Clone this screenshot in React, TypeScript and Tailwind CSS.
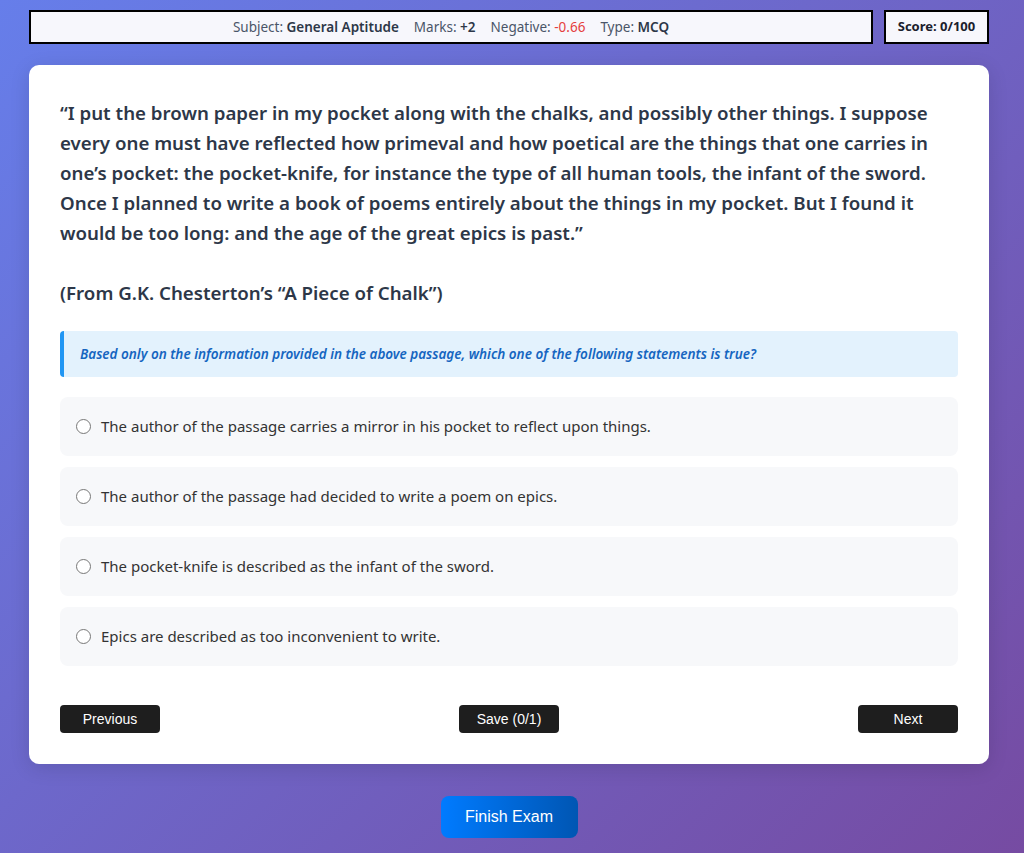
import { useState } from 'react';

const options = [
  'The author of the passage carries a mirror in his pocket to reflect upon things.',
  'The author of the passage had decided to write a poem on epics.',
  'The pocket-knife is described as the infant of the sword.',
  'Epics are described as too inconvenient to write.',
];

export default function App() {
  const [selected, setSelected] = useState<number | null>(null);

  return (
    <div
      className="min-h-[853px] w-full bg-[linear-gradient(135deg,#667eea_0%,#764ba2_100%)] pt-[10px] pl-[29px] pb-[15px]"
      style={{ fontFamily: '"Noto Sans", "Open Sans", sans-serif' }}
    >
      <div className="w-[960px]">
        {/* Top info bar */}
        <div className="flex gap-[11px] h-[34px]">
          <div className="flex-1 border-2 border-black bg-[#f7f7fc] flex items-center justify-center gap-[15px] text-[13.5px] text-[#4a5568]">
            <span>
              Subject: <span className="font-semibold text-[#2d3748]">General Aptitude</span>
            </span>
            <span>
              Marks: <span className="font-semibold text-[#2d3748]">+2</span>
            </span>
            <span>
              Negative: <span className="text-[#e53e3e]">-0.66</span>
            </span>
            <span>
              Type: <span className="font-semibold text-[#2d3748]">MCQ</span>
            </span>
          </div>
          <div className="w-[105px] border-2 border-black bg-[#f7f7fc] flex items-center justify-center text-[13px] font-bold text-[#1a202c]">
            Score: 0/100
          </div>
        </div>

        {/* Question card */}
        <div className="mt-[21px] bg-white rounded-[10px] shadow-[0_4px_20px_rgba(0,0,0,0.12)] px-[31px] pt-[33px] pb-[31px]">
          <p className="text-[18.7px] leading-[30px] font-semibold text-[#2d3748]">
            “I put the brown paper in my pocket along with the chalks, and possibly other things. I suppose
            every one must have reflected how primeval and how poetical are the things that one carries in
            one’s pocket: the pocket-knife, for instance the type of all human tools, the infant of the sword.
            Once I planned to write a book of poems entirely about the things in my pocket. But I found it
            would be too long: and the age of the great epics is past.”
          </p>
          <p className="mt-[30px] text-[18.7px] leading-[30px] font-semibold text-[#2d3748]">
            (From G.K. Chesterton’s “A Piece of Chalk”)
          </p>

          <div className="mt-[23px] h-[46px] flex items-center bg-[#e3f2fd] border-l-4 border-[#2196f3] rounded-[4px] pl-[16px] text-[13.5px] italic font-semibold text-[#1565c0]">
            Based only on the information provided in the above passage, which one of the following statements is true?
          </div>

          <div className="mt-[20px] flex flex-col gap-[11px]">
            {options.map((opt, i) => (
              <label
                key={i}
                className="h-[59px] flex items-center gap-[10px] pl-[16px] bg-[#f7f8fa] rounded-[8px] cursor-pointer text-[15px] text-[#333333]"
              >
                <input
                  type="radio"
                  name="answer"
                  checked={selected === i}
                  onChange={() => setSelected(i)}
                  className="w-[15px] h-[15px] m-0 accent-[#2196f3]"
                />
                {opt}
              </label>
            ))}
          </div>

          <div
            className="mt-[39px] flex justify-between"
            style={{ fontFamily: '"Liberation Sans", Arial, sans-serif' }}
          >
            <button className="w-[100px] h-[28px] bg-[#1e1e1e] text-white text-[14px] rounded-[4px]">Previous</button>
            <button className="w-[100px] h-[28px] bg-[#1e1e1e] text-white text-[14px] rounded-[4px]">Save (0/1)</button>
            <button className="w-[100px] h-[28px] bg-[#1e1e1e] text-white text-[14px] rounded-[4px]">Next</button>
          </div>
        </div>

        <div className="mt-[32px] flex justify-center">
          <button
            className="w-[137px] h-[42px] rounded-[8px] bg-[linear-gradient(90deg,#007bff,#0056b3)] text-white text-[16px]"
            style={{ fontFamily: '"Liberation Sans", Arial, sans-serif' }}
          >
            Finish Exam
          </button>
        </div>
      </div>
    </div>
  );
}
